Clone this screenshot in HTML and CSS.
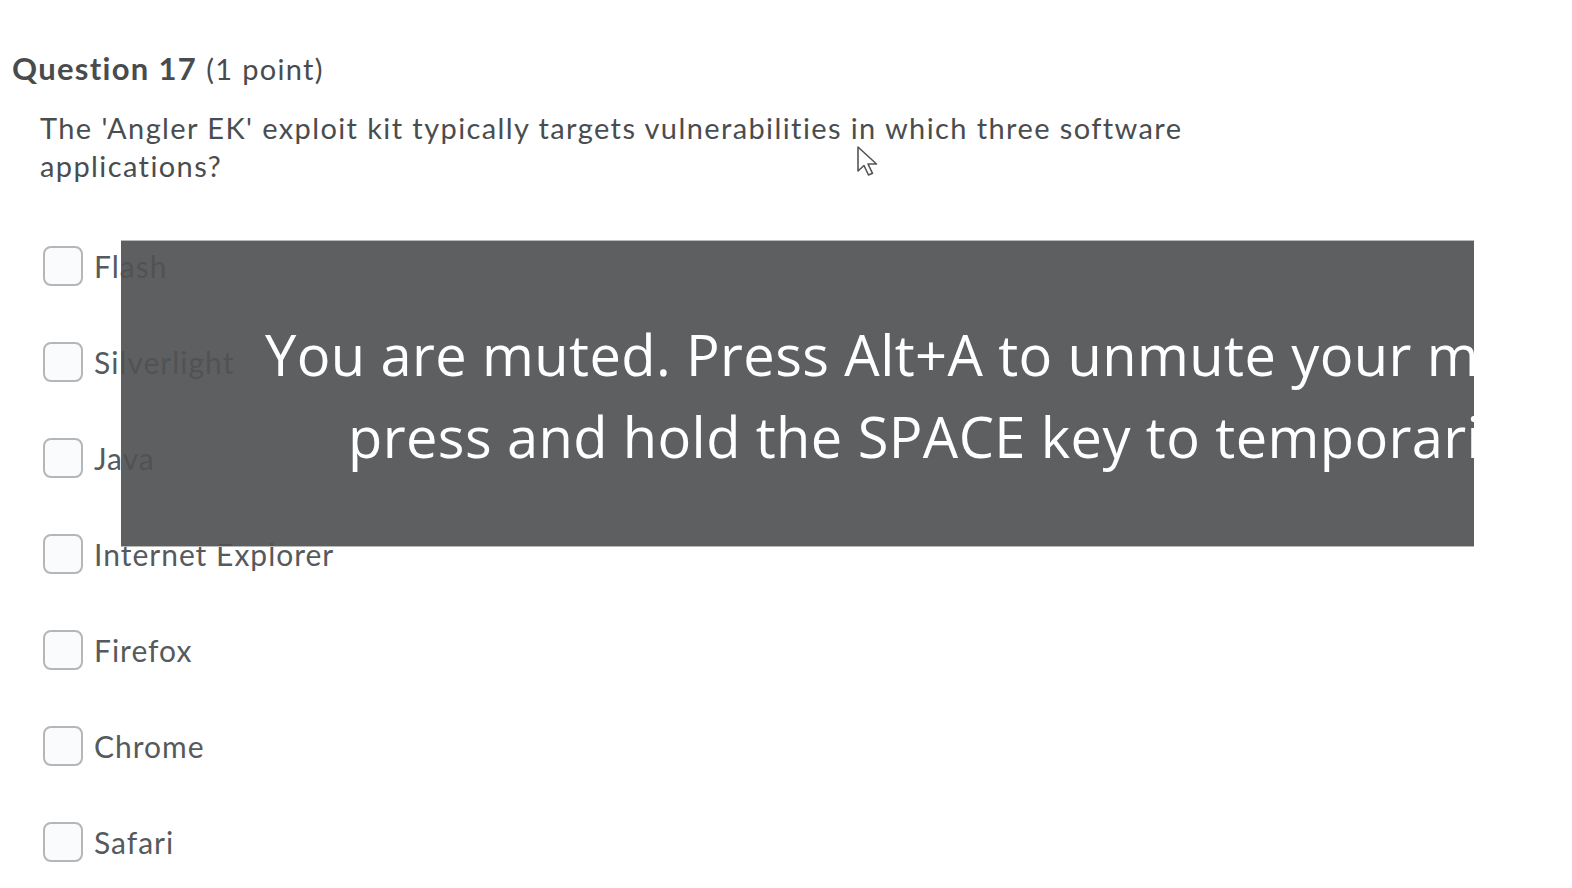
FILE: index.html
```html
<!DOCTYPE html>
<html>
<head>
<meta charset="utf-8">
<link rel="stylesheet" href="styles.css">
</head>
<body>
<div class="page">
  <h2 class="q-title"><span class="q-num">Question 17</span> <span class="q-pts">(1 point)</span></h2>
  <p class="q-text">The 'Angler EK' exploit kit typically targets vulnerabilities in which three software applications?</p>
  <ul class="options">
    <li class="option"><span class="box"></span><span class="label">Flash</span></li>
    <li class="option"><span class="box"></span><span class="label">Silverlight</span></li>
    <li class="option"><span class="box"></span><span class="label">Java</span></li>
    <li class="option"><span class="box"></span><span class="label">Internet Explorer</span></li>
    <li class="option"><span class="box"></span><span class="label">Firefox</span></li>
    <li class="option"><span class="box"></span><span class="label">Chrome</span></li>
    <li class="option"><span class="box"></span><span class="label">Safari</span></li>
  </ul>
</div>
<div class="muted">
  <div class="muted-line l1">You are muted. Press Alt+A to unmute your microphone, or</div>
  <div class="muted-line l2">press and hold the SPACE key to temporarily unmute.</div>
</div>
<svg class="cursor" width="30" height="38" viewBox="0 0 30 38">
  <path d="M2 2 L2 26 L8 20.5 L12.5 30 L16.5 28.3 L12 19 L20.5 19 Z" fill="#fff" stroke="#555" stroke-width="1.6" stroke-linejoin="round"/>
</svg>
</body>
</html>
```

FILE: styles.css
```css
html, body {
  margin: 0;
  padding: 0;
  background: #ffffff;
}
body {
  width: 1572px;
  height: 888px;
  overflow: hidden;
  position: relative;
  font-family: Lato, "Open Sans", sans-serif;
  color: #494c4e;
  font-variant-ligatures: none;
}
.page {
  padding: 46px 0 0 12px;
}
.q-title {
  margin: 0;
  font-size: 31px;
  line-height: 44px;
  font-weight: 400;
  color: #494c4e;
  letter-spacing: 1.3px;
}
.q-num {
  font-weight: 700;
}
.q-pts {
  font-size: 29px;
}
.q-text {
  margin: 18px 0 0 28px;
  width: 1170px;
  font-size: 29px;
  line-height: 38px;
  letter-spacing: 1.4px;
  color: #4a4d4f;
}
.options {
  list-style: none;
  margin: 61px 0 0 31px;
  padding: 0;
  display: flex;
  flex-direction: column;
  gap: 56px;
}
.option {
  display: flex;
  align-items: center;
  gap: 11px;
  height: 40px;
}
.box {
  width: 36px;
  height: 36px;
  border: 2px solid #b4b6b8;
  border-radius: 8px;
  background: #fafbfc;
}
.label {
  font-size: 30px;
  letter-spacing: 1px;
  color: #565a5c;
}
.muted {
  position: absolute;
  left: 121px;
  top: 240px;
  width: 1353px;
  height: 307px;
  background: rgba(80, 81, 83, 0.92);
  border-top: 1px solid #b9b9b9;
  border-bottom: 1px solid #b9b9b9;
  overflow: hidden;
  box-sizing: border-box;
  font-family: "Open Sans", "Noto Sans", sans-serif;
  color: #ffffff;
  font-size: 56px;
  line-height: 82px;
  letter-spacing: 0.4px;
  white-space: nowrap;
  padding-top: 72px;
}
.l1 {
  padding-left: 144px;
}
.l2 {
  padding-left: 227px;
}
.cursor {
  position: absolute;
  left: 856px;
  top: 145px;
}
```
